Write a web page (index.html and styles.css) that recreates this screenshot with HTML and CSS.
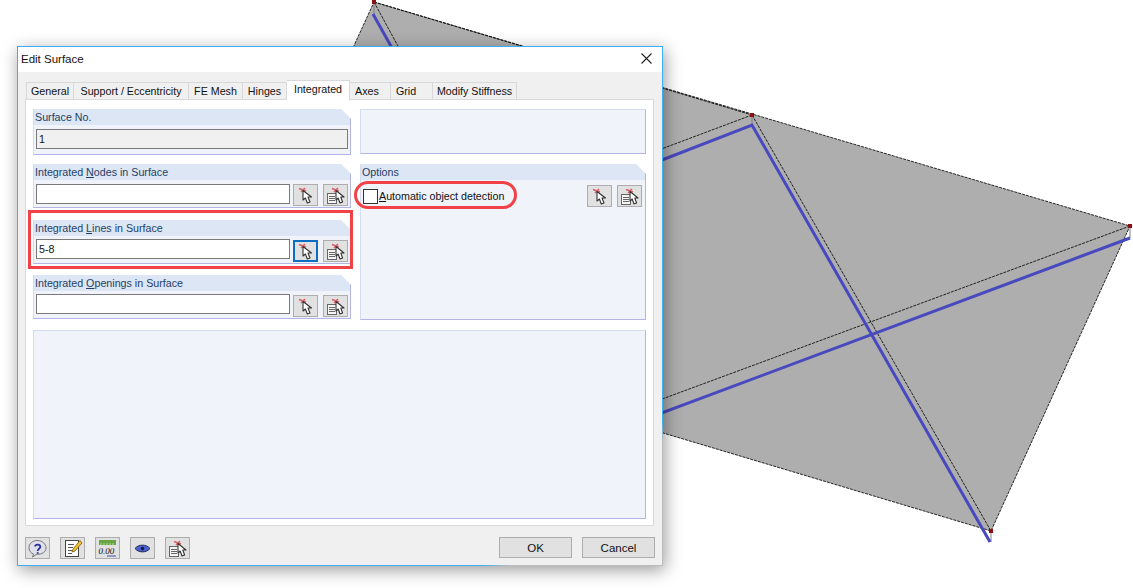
FILE: index.html
```html
<!DOCTYPE html>
<html lang="en">
<head>
  <meta charset="UTF-8" />
  <title>Edit Surface</title>
  <link rel="stylesheet" href="styles.css">
</head>
<body>

  <!-- shared icons -->
  <svg class="defs" width="0" height="0">
    <symbol id="pick" viewBox="0 0 25 21">
      <path d="M6 3.500L13 6M12 3L8 7" stroke="#d9606a" stroke-width="1.600" fill="none"/>
      <path d="M10 5.500V15L12.400 13 14.300 18 17 17 15 12H18.500Z" fill="#fff" stroke="#333" stroke-width="1.100" stroke-linejoin="round"/>
    </symbol>
    <symbol id="pick-list" viewBox="0 0 25 21">
      <rect x="4.500" y="8.500" width="9" height="10" fill="#f4f4f4" stroke="#666"/>
      <path d="M6 11.500H12M6 13.500H12M6 15.500H12" stroke="#666"/>
      <path d="M9 3.500L16 6M15 3L11 7" stroke="#d9606a" stroke-width="1.600" fill="none"/>
      <path d="M13 5.500V15L15.200 13 17 18 19.600 17 17.800 12H21Z" fill="#fff" stroke="#333" stroke-width="1.100" stroke-linejoin="round"/>
    </symbol>
  </svg>

  <!-- model behind the dialog -->
  <svg class="model" width="1133" height="588" viewBox="0 0 1133 588">
    <polygon points="374,2 1130,226 991,531 235,305" fill="#aeaeae"/>
    <g fill="none" stroke="#111" stroke-width="0.9" stroke-dasharray="3 1">
      <polygon points="374,2 1130,226 991,531 235,305"/>
      <path d="M374 2L752 115M374 2L430 105M752 115L991 531M752 115L600 172M1130 226L600 422"/>
    </g>
    <g stroke="#808080" stroke-width="1">
      <path d="M374 2V14M752 115V125M1130 226V238M991 531V542"/>
    </g>
    <g fill="none" stroke="#4848bf" stroke-width="3">
      <path d="M373 14L430 116M600 184L752 125L990 542M1130 238L600 436"/>
    </g>
    <g fill="#8b0f14">
      <rect x="372" y="0" width="4" height="4"/>
      <rect x="750" y="113" width="4" height="4"/>
      <rect x="1128" y="224" width="4" height="4"/>
      <rect x="989" y="529" width="4" height="4"/>
    </g>
  </svg>

  <div class="dialog">
    <div class="titlebar">
      <span>Edit Surface</span>
      <svg class="close" width="11" height="11" viewBox="0 0 11 11">
        <path d="M0.500 0.500L10.500 10.500M10.500 0.500L0.500 10.500" stroke="#222" stroke-width="1.100"/>
      </svg>
    </div>

    <div class="body">
      <div class="tabs">
        <div class="tab">General</div>
        <div class="tab">Support / Eccentricity</div>
        <div class="tab">FE Mesh</div>
        <div class="tab">Hinges</div>
        <div class="tab active">Integrated</div>
        <div class="tab tab-left">Axes</div>
        <div class="tab tab-left">Grid</div>
        <div class="tab">Modify Stiffness</div>
      </div>

      <div class="panel">
        <div class="cols">
          <div class="col-left">
            <div class="group g-no">
              <div class="group-head">Surface No.</div>
              <div class="row"><div class="input disabled">1</div></div>
            </div>
            <div class="group g-nodes">
              <div class="group-head">Integrated <u>N</u>odes in Surface</div>
              <div class="row">
                <div class="input"></div>
                <button class="btn-icon"><svg width="25" height="21"><use href="#pick"/></svg></button>
                <button class="btn-icon"><svg width="25" height="21"><use href="#pick-list"/></svg></button>
              </div>
            </div>
            <div class="group g-lines">
              <div class="group-head">Integrated <u>L</u>ines in Surface</div>
              <div class="row">
                <div class="input">5-8</div>
                <button class="btn-icon focus"><svg width="25" height="21"><use href="#pick"/></svg></button>
                <button class="btn-icon"><svg width="25" height="21"><use href="#pick-list"/></svg></button>
              </div>
            </div>
            <div class="group g-open">
              <div class="group-head">Integrated <u>O</u>penings in Surface</div>
              <div class="row">
                <div class="input"></div>
                <button class="btn-icon"><svg width="25" height="21"><use href="#pick"/></svg></button>
                <button class="btn-icon"><svg width="25" height="21"><use href="#pick-list"/></svg></button>
              </div>
            </div>
          </div>

          <div class="col-right">
            <div class="box-empty"></div>
            <div class="group g-options">
              <div class="group-head">Options</div>
              <div class="options-row">
                <span class="check"></span>
                <span class="check-label"><u>A</u>utomatic object detection</span>
                <button class="btn-icon"><svg width="25" height="21"><use href="#pick"/></svg></button>
                <button class="btn-icon"><svg width="25" height="21"><use href="#pick-list"/></svg></button>
              </div>
            </div>
          </div>
        </div>
        <div class="box-large"></div>
      </div>

      <div class="footer">
        <button class="btn-icon">
          <svg width="25" height="21" viewBox="0 0 25 21">
            <path d="M12.500 2.500C7 2.500 4 6 4 10c0 3 2 5.200 4.500 6l-1 3 4-2.700c5.500 .2 9.500-2.300 9.500-6.300 0-4-3.500-7.500-9-7.500Z" fill="#dfe0ea" stroke="#777"/>
            <path d="M10 8.500c.4-2.600 5.500-2.600 5.300.4-.1 1.900-2.600 1.800-2.600 4M12.700 14.300v1.500" fill="none" stroke="#2a2f9a" stroke-width="1.800"/>
          </svg>
        </button>
        <button class="btn-icon">
          <svg width="25" height="21" viewBox="0 0 25 21">
            <rect x="5.500" y="2.500" width="13" height="16" fill="#fff" stroke="#444"/>
            <path d="M8 6.500H14M8 9.500H13M8 12.500H12M8 15.500H12" stroke="#555"/>
            <path d="M20 2.500L13 11 12 14 15 13 22 5Z" fill="#f2c230" stroke="#7a5a10" stroke-width="0.800"/>
          </svg>
        </button>
        <button class="btn-icon">
          <svg width="25" height="21" viewBox="0 0 25 21">
            <rect x="4" y="2" width="17" height="5" fill="#6aa544"/>
            <path d="M6 5V7M9 5V7M12 5V7M15 5V7M18 5V7" stroke="#d7e8c8" stroke-width="0.700"/>
            <text x="3.500" y="16" class="calc-text">0.00</text>
            <path d="M12 18H21" stroke="#3b4fa8" stroke-width="1"/>
          </svg>
        </button>
        <button class="btn-icon">
          <svg width="25" height="21" viewBox="0 0 25 21">
            <path d="M5 10.500C8.500 6 16.500 6 20 10.500 16.500 15 8.500 15 5 10.500Z" fill="#4a62d8" stroke="#23264a"/>
            <circle cx="12.500" cy="10.500" r="1.800" fill="#14183a"/>
          </svg>
        </button>
        <button class="btn-icon"><svg width="25" height="21"><use href="#pick-list"/></svg></button>
        <div class="spacer"></div>
        <button class="btn-text">OK</button>
        <button class="btn-text">Cancel</button>
      </div>
    </div>

    <!-- annotations drawn on the screenshot -->
    <div class="mark-rect"></div>
    <div class="mark-oval"></div>
  </div>

</body>
</html>
```

FILE: styles.css
```css
html, body {
  margin: 0;
  height: 100%;
  background: #fff;
  overflow: hidden;
}
body {
  font-family: "Liberation Sans", Arial, sans-serif;
  font-size: 10.7px;
  color: #111;
}
button {
  font: inherit;
  padding: 0;
}
u {
  text-underline-offset: 1px;
}
.defs {
  position: absolute;
}
.model {
  position: absolute;
  left: 0;
  top: 0;
}

.dialog {
  position: absolute;
  left: 17px;
  top: 46px;
  width: 646px;
  height: 520px;
  box-sizing: border-box;
  display: flex;
  flex-direction: column;
  background: #f0f0f0;
  border: 1px solid #3daeef;
  border-image: linear-gradient(to bottom right, #3daeef 86%, #bcbcbc 88%) 1;
  box-shadow: 2px 4px 16px rgba(0, 0, 0, 0.4);
}
.titlebar {
  height: 25px;
  flex: none;
  display: flex;
  align-items: center;
  justify-content: space-between;
  padding: 0 10px 2px 3px;
  box-sizing: border-box;
  background: #fff;
  font-size: 11.500px;
  color: #1a0f0f;
}
.close {
  display: block;
}
.body {
  flex: 1;
  display: flex;
  flex-direction: column;
  padding: 8px 8px 0 7px;
}

.tabs {
  display: grid;
  grid-template-columns: 48px 115px 54px 44px 63px 41px 42px 84px;
  height: 19px;
  margin-left: 1px;
  flex: none;
  align-items: end;
}
.tab {
  height: 18px;
  box-sizing: border-box;
  line-height: 17px;
  text-align: center;
  white-space: nowrap;
  background: #f0f0f0;
  border: 1px solid #d9d9d9;
  border-bottom: none;
  border-left: none;
}
.tab:first-child {
  border-left: 1px solid #d9d9d9;
}
.tab-left {
  text-align: left;
  padding-left: 5px;
}
.tab.active {
  height: 21px;
  line-height: 16px;
  margin-bottom: -1px;
  background: #fff;
  position: relative;
}

.panel {
  height: 427px;
  box-sizing: border-box;
  flex: none;
  padding: 9px 6px 0 7px;
  background: #fff;
  border: 1px solid #d9d9d9;
}
.cols {
  display: flex;
  gap: 9px;
}
.col-left {
  width: 318px;
  display: flex;
  flex-direction: column;
}
.col-right {
  width: 286px;
  display: flex;
  flex-direction: column;
  gap: 10px;
}

.group {
  box-sizing: border-box;
  background: #f0f3fa;
  border: 1px solid #b4b4e6;
  border-top: none;
  border-left-color: #d6dcf0;
  clip-path: polygon(0 0, calc(100% - 10px) 0, 100% 10px, 100% 100%, 0 100%);
}
.group-head {
  height: 16px;
  line-height: 16px;
  padding-left: 1px;
  background: #dce6f4;
  color: #1f3f66;
  white-space: nowrap;
}
.g-no { height: 46px; }
.g-nodes { height: 44px; margin-top: 9px; }
.g-lines { height: 44px; margin-top: 12px; }
.g-open { height: 44px; margin-top: 11px; }
.g-options { height: 156px; }

.row {
  display: flex;
  align-items: flex-start;
  gap: 5px;
  padding: 4px 0 0 2px;
}
.g-lines .row, .g-open .row {
  padding-top: 3px;
}
.g-lines .btn-icon, .g-open .btn-icon {
  margin-top: 1px;
}
.input {
  width: 254px;
  height: 20px;
  box-sizing: border-box;
  margin-right: -2px;
  padding-left: 2px;
  line-height: 18px;
  background: #fff;
  border: 1px solid #7a7a7a;
}
.input.disabled {
  width: 312px;
  background: #f0f0f0;
}

.btn-icon {
  width: 25px;
  height: 22px;
  flex: none;
  box-sizing: border-box;
  background: #e1e1e1;
  border: 1px solid #adadad;
  display: flex;
  align-items: center;
  justify-content: center;
}
.btn-icon svg {
  flex: none;
  display: block;
}
.btn-icon.focus {
  border: 2px solid #0a6fc2;
}
.calc-text {
  font-family: "Liberation Serif", serif;
  font-size: 9px;
  font-style: italic;
  fill: #111;
}

.box-empty {
  height: 45px;
  background: #f0f3fa;
  border: 1px solid #b4b4e6;
  border-top-color: #d6dcf0;
  border-left-color: #d6dcf0;
  box-sizing: border-box;
}
.options-row {
  display: flex;
  align-items: center;
  gap: 5px;
  padding: 5px 3px 0 2px;
}
.check {
  width: 13px;
  height: 13px;
  flex: none;
  background: #fff;
  border: 1px solid #333;
}
.check-label {
  flex: 1;
  margin-left: -4px;
  white-space: nowrap;
}
.box-large {
  width: 613px;
  height: 189px;
  margin-top: 10px;
  box-sizing: border-box;
  background: #f0f3fa;
  border: 1px solid #b4b4e6;
  border-top-color: #d6dcf0;
  border-left-color: #d6dcf0;
}

.footer {
  display: flex;
  align-items: flex-start;
  gap: 10px;
  margin-right: -1px;
  padding-top: 11px;
}
.spacer {
  flex: 1;
}
.btn-text {
  width: 73px;
  height: 21px;
  box-sizing: border-box;
  background: #e1e1e1;
  border: 1px solid #adadad;
  color: #111;
  font-size: 11.500px;
}

.mark-rect, .mark-oval {
  position: absolute;
  box-sizing: border-box;
  pointer-events: none;
}
.mark-rect {
  left: 10px;
  top: 163px;
  width: 325px;
  height: 59px;
  border: 3px solid #f04247;
}
.mark-oval {
  left: 336px;
  top: 134px;
  width: 163px;
  height: 28px;
  border: 3px solid #f04247;
  border-radius: 14px;
}
```
